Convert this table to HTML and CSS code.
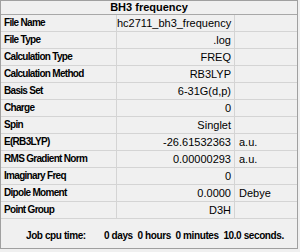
FILE: index.html
```html
<!DOCTYPE html>
<html>
<head>
<meta charset="utf-8">
<link rel="stylesheet" href="styles.css">
</head>
<body>
<div class="panel">
  <div class="title">BH3 frequency</div>
  <div class="grid">
    <div class="lbl">File Name</div><div class="val">hc2711_bh3_frequency</div><div class="unit"></div>
    <div class="lbl">File Type</div><div class="val">.log</div><div class="unit"></div>
    <div class="lbl">Calculation Type</div><div class="val">FREQ</div><div class="unit"></div>
    <div class="lbl">Calculation Method</div><div class="val">RB3LYP</div><div class="unit"></div>
    <div class="lbl">Basis Set</div><div class="val">6-31G(d,p)</div><div class="unit"></div>
    <div class="lbl">Charge</div><div class="val">0</div><div class="unit"></div>
    <div class="lbl">Spin</div><div class="val">Singlet</div><div class="unit"></div>
    <div class="lbl">E(RB3LYP)</div><div class="val">-26.61532363</div><div class="unit">a.u.</div>
    <div class="lbl">RMS Gradient Norm</div><div class="val">0.00000293</div><div class="unit">a.u.</div>
    <div class="lbl">Imaginary Freq</div><div class="val">0</div><div class="unit"></div>
    <div class="lbl">Dipole Moment</div><div class="val">0.0000</div><div class="unit">Debye</div>
    <div class="lbl">Point Group</div><div class="val">D3H</div><div class="unit"></div>
  </div>
  <div class="footer">
    <span class="flbl">Job cpu time:</span>
    <span class="fval">0 days&nbsp; 0 hours&nbsp; 0 minutes&nbsp; 10.0 seconds.</span>
  </div>
</div>
</body>
</html>
```
FILE: styles.css
```css
html, body {
  margin: 0;
  padding: 0;
  background: #f0f0f0;
}
.panel {
  width: 298px;
  height: 249px;
  border: 1px solid #a0a0a0;
  box-sizing: border-box;
  background: #f0f0f0;
  font-family: "Liberation Sans", Arial, sans-serif;
  font-size: 11px;
  color: #000;
  display: flex;
  flex-direction: column;
}
.title {
  height: 13px;
  line-height: 13px;
  text-align: center;
  font-weight: bold;
  border-bottom: 1px solid #a8a8a8;
}
.grid {
  display: grid;
  grid-template-columns: 116px 118px 1fr;
}
.grid > div {
  height: 16px;
  line-height: 16px;
  border-bottom: 1px solid #d4d4d4;
  white-space: nowrap;
  overflow: hidden;
}
.lbl {
  font-size: 10px;
  letter-spacing: -0.7px;
  font-weight: bold;
  padding-left: 3px;
  border-right: 1px solid #d4d4d4;
}
.val {
  text-align: right;
  padding-right: 3px;
  border-right: 1px solid #d4d4d4;
}
.unit {
  padding-left: 4px;
}
.footer {
  flex: 1;
  display: flex;
  align-items: center;
  padding-left: 25px;
  padding-top: 4px;
  font-size: 10px;
  letter-spacing: -0.4px;
  font-weight: bold;
  white-space: nowrap;
}
.flbl {
  width: 78px;
}
```
